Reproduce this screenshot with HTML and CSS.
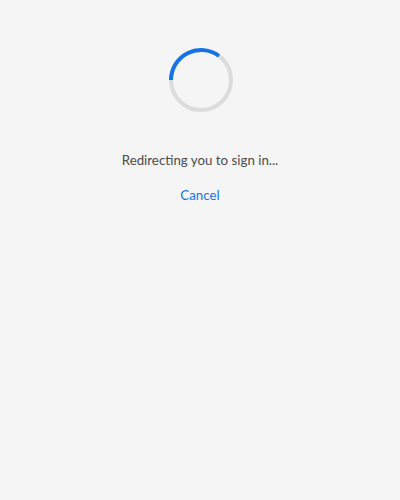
FILE: index.html
```html
<!DOCTYPE html>
<html>
<head>
<meta charset="utf-8">
<link rel="stylesheet" href="styles.css">
</head>
<body>
<main class="page">
  <svg class="spinner" width="66" height="66" viewBox="0 0 66 66">
    <circle cx="33" cy="33" r="30" fill="none" stroke="#dcdcdc" stroke-width="4"/>
    <path d="M3 33 A30 30 0 0 1 51 9" fill="none" stroke="#1473e6" stroke-width="4"/>
  </svg>
  <p class="message">Redirecting you to sign in...</p>
  <a class="cancel" href="#">Cancel</a>
</main>
</body>
</html>
```

FILE: styles.css
```css
html, body {
  margin: 0;
  padding: 0;
  background: #f5f5f5;
  height: 100%;
}
.page {
  display: flex;
  flex-direction: column;
  align-items: center;
  padding-top: 47px;
  font-family: "Lato", "Open Sans", sans-serif;
}
.spinner {
  display: block;
  margin-left: 1px;
}
.message {
  margin: 37px 0 0;
  font-size: 13.3px;
  line-height: 20px;
  color: #4b4b4b;
}
.cancel {
  margin-top: 15px;
  font-size: 13.3px;
  line-height: 20px;
  color: #1473e6;
  text-decoration: none;
}
```
